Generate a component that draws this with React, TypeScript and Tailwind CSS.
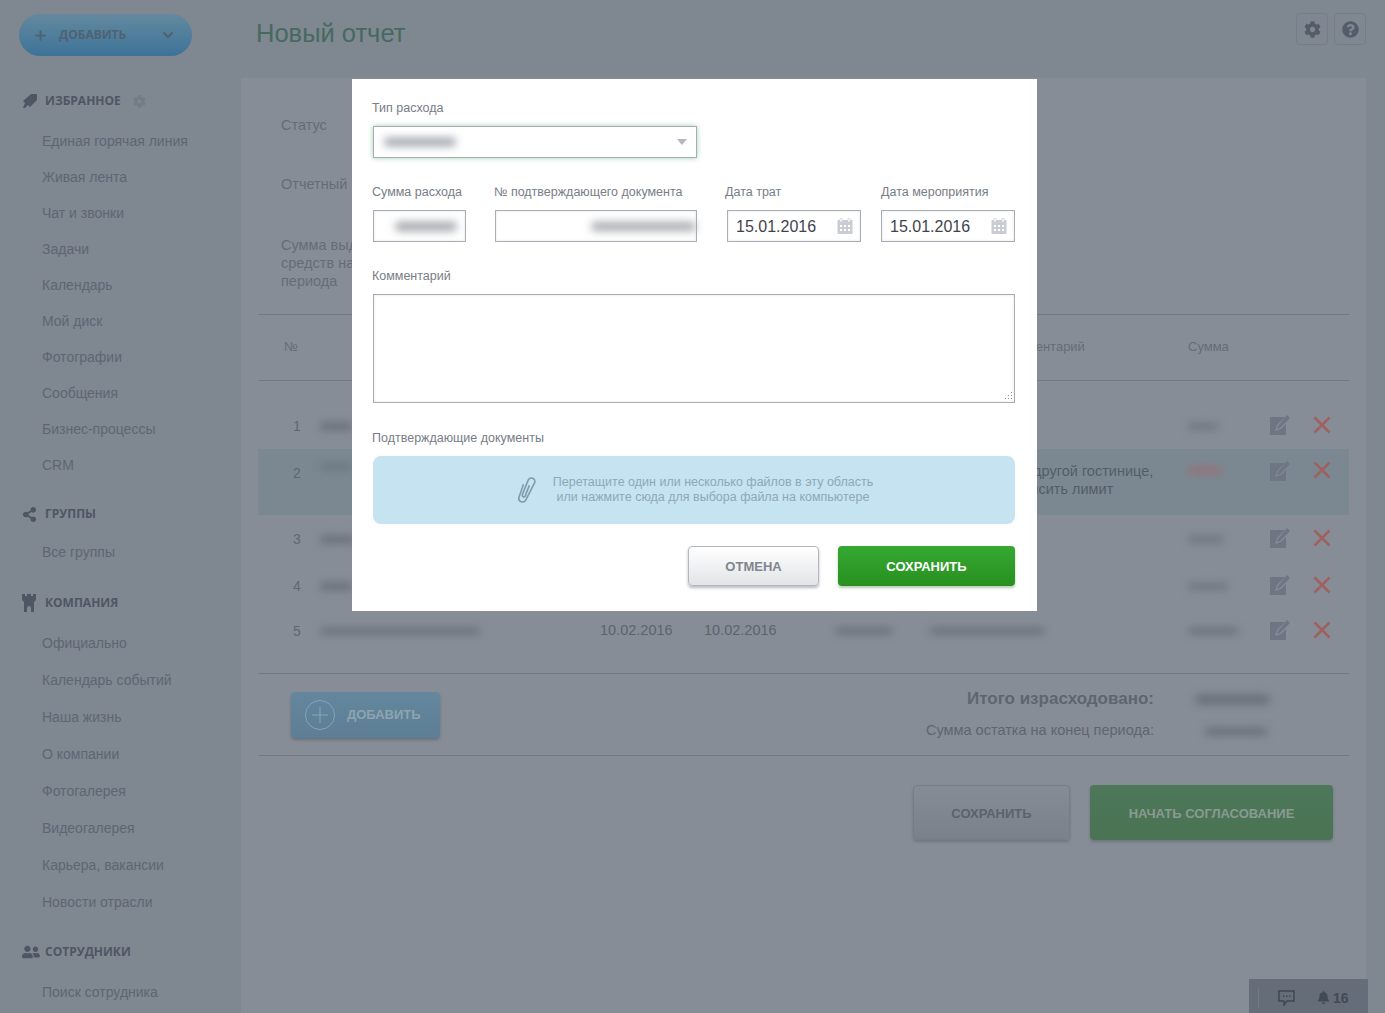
import type { ReactNode } from "react";
import { FaBell, FaCog, FaQuestionCircle, FaShareAlt, FaUserFriends } from "react-icons/fa";
import { ChevronDown, Plus } from "lucide-react";

const favorites = ["Единая горячая линия", "Живая лента", "Чат и звонки", "Задачи", "Календарь", "Мой диск", "Фотографии", "Сообщения", "Бизнес-процессы", "CRM"];
const company = ["Официально", "Календарь событий", "Наша жизнь", "О компании", "Фотогалерея", "Видеогалерея", "Карьера, вакансии", "Новости отрасли"];

const Smudge = ({ w, h = 7, className = "bg-[#666d77]" }: { w: number; h?: number; className?: string }) => (
  <span className={`block rounded-full blur-[4px] ${className}`} style={{ width: w, height: h }} />
);

const EditIcon = () => (
  <svg width="20" height="20" viewBox="0 0 20 20" className="block">
    <path d="M0 2h15L7 10l-2 6 6-2 5-5v11H0z" fill="#6f7683" />
    <path d="M17 0l3 3-10 10-3 1 1-3z" fill="#6f7683" />
  </svg>
);

const DeleteIcon = () => (
  <svg width="18" height="18" viewBox="0 0 18 18" className="block">
    <path d="M1.500 1.500l15 15M16.500 1.500l-15 15" stroke="#a0605f" strokeWidth="2.500" />
  </svg>
);

const CalendarIcon = () => (
  <svg width="16" height="16" viewBox="0 0 16 16" className="block">
    <rect x="0.500" y="2" width="15" height="14" rx="1" fill="#c9ccd3" />
    <rect x="3" y="0.500" width="2" height="3.500" fill="#fff" stroke="#c9ccd3" strokeWidth="0.600" />
    <rect x="11" y="0.500" width="2" height="3.500" fill="#fff" stroke="#c9ccd3" strokeWidth="0.600" />
    <path d="M3 7h2v2H3zM7 7h2v2H7zM11 7h2v2h-2zM3 11h2v2H3zM7 11h2v2H7zM11 11h2v2h-2z" fill="#fff" />
  </svg>
);

const SectionTitle = ({ icon, title }: { icon: ReactNode; title: string }) => (
  <div className="flex h-5 items-center">
    <span className="flex w-[45px] pl-[22px] text-[#4f5663]">{icon}</span>
    <span className="font-['Open_Sans'] text-xs font-bold text-[#4f5663]">{title}</span>
  </div>
);

const SideLink = ({ label, h }: { label: string; h: number }) => (
  <a className="block pl-[42px] text-sm text-[#5e6672]" style={{ height: h, lineHeight: `${h}px` }}>
    {label}
  </a>
);

const Sidebar = () => (
  <aside className="w-[241px] shrink-0">
    <div className="mt-[14px] ml-[19px] flex h-[42px] w-[173px] items-center rounded-[21px] bg-gradient-to-b from-[#63899f] to-[#3d7398] pr-4 pl-[14px]">
      <Plus size={15} strokeWidth={3} className="text-[#4f6272]" />
      <span className="ml-[11px] font-['Open_Sans'] text-xs font-bold text-[#4f6272]">ДОБАВИТЬ</span>
      <ChevronDown size={16} strokeWidth={3} className="ml-auto text-[#4f6272]" />
    </div>
    <div className="mt-[35px]">
      <div className="flex items-center">
        <SectionTitle
          icon={
            <svg width="16" height="16" viewBox="0 0 16 16">
              <path d="M9 1h6v6l-7 7-2-2-3 3H1l2-5-2-2z" fill="#4f5663" />
            </svg>
          }
          title="ИЗБРАННОЕ"
        />
        <FaCog size={13} className="ml-[12px] text-[#737b87]" />
      </div>
      <div className="mt-[12px]">
        {favorites.map((f) => <SideLink key={f} label={f} h={36} />)}
      </div>
    </div>
    <div className="mt-[21px]"><SectionTitle icon={<FaShareAlt size={15} />} title="ГРУППЫ" /></div>
    <div className="mt-[10px]"><SideLink label="Все группы" h={36} /></div>
    <div className="mt-[23px]">
      <SectionTitle
        icon={
          <svg width="14" height="18" viewBox="0 0 14 18">
            <path d="M0 0h3v2h2V0h4v2h2V0h3v6l-2 2v10H9v-4a2 2 0 0 0-4 0v4H2V8L0 6z" fill="#4f5663" />
          </svg>
        }
        title="КОМПАНИЯ"
      />
    </div>
    <div className="mt-[12px]">
      {company.map((c) => <SideLink key={c} label={c} h={37} />)}
    </div>
    <div className="mt-[21px]"><SectionTitle icon={<FaUserFriends size={18} />} title="СОТРУДНИКИ" /></div>
    <div className="mt-[12px]"><SideLink label="Поиск сотрудника" h={36} /></div>
  </aside>
);

type Row = { n: number; name: ReactNode; d1?: string; d2?: string; extra?: boolean; comment?: ReactNode; sum: ReactNode; h: number; active?: boolean };

const rows: Row[] = [
  { n: 1, name: <Smudge w={32} />, sum: <Smudge w={30} h={5} />, h: 46 },
  {
    n: 2, name: <Smudge w={32} className="bg-[#6d7681]" />, active: true, h: 66,
    comment: (
      <div className="-mt-px text-[14.500px] leading-[18px] whitespace-nowrap text-[#555c66]">
        <span className="block pl-[15px]">Заселение в другой гостинице,</span>
        <span className="-ml-[11px] block">необходимо повысить лимит</span>
      </div>
    ),
    sum: <div className="pt-[5px]"><Smudge w={34} h={5} className="bg-[#a0686a]" /></div>,
  },
  { n: 3, name: <Smudge w={36} />, sum: <Smudge w={36} h={5} />, h: 48 },
  { n: 4, name: <Smudge w={32} />, sum: <Smudge w={40} h={5} />, h: 46 },
  {
    n: 5, name: <Smudge w={160} h={6} />, d1: "10.02.2016", d2: "10.02.2016", extra: true,
    comment: <Smudge w={115} h={6} />, sum: <Smudge w={50} h={6} />, h: 44,
  },
];

const rowGrid = "grid grid-cols-[62px_280px_104px_131px_95px_258px_82px_43px_36px]";

const Table = () => (
  <div className="text-[14.500px] text-[#5d636d]">
    <div className={`${rowGrid} h-[67px] items-center border-y border-[#727982] pb-[2px] text-[13px] text-[#666c76]`}>
      <span className="pl-[26px]">№</span>
      <span />
      <span />
      <span />
      <span />
      <span className="pl-[73px]">Комментарий</span>
      <span className="col-span-3">Сумма</span>
    </div>
    <div className="mt-[22px] border-b border-[#727982] pb-[20px]">
      {rows.map((r) => (
        <div key={r.n} className={`${rowGrid} ${r.active ? "items-start bg-[#7b8892] pt-[14px]" : "items-center"}`} style={{ height: r.h }}>
          <span className="pl-[35px] text-sm text-[#5f6670]">{r.n}</span>
          <span>{r.name}</span>
          <span>{r.d1}</span>
          <span>{r.d2}</span>
          <span>{r.extra && <Smudge w={58} h={6} />}</span>
          <span>{r.comment}</span>
          <span>{r.sum}</span>
          <span className="-mt-[2px]"><EditIcon /></span>
          <span className="-mt-[2px]"><DeleteIcon /></span>
        </div>
      ))}
    </div>
  </div>
);

const Main = () => (
  <main className="flex w-[1144px] shrink-0 flex-col">
    <header className="flex h-[78px] items-start pr-[19px] pl-[15px]">
      <h1 className="mt-[17px] text-[25.500px] leading-8 text-[#466a60]">Новый отчет</h1>
      <div className="mt-[13px] ml-auto flex gap-[6px]">
        <span className="flex size-8 items-center justify-center rounded-sm border border-[#767d87]"><FaCog size={17} className="text-[#555c69]" /></span>
        <span className="flex size-8 items-center justify-center rounded-sm border border-[#767d87]"><FaQuestionCircle size={17} className="text-[#555c69]" /></span>
      </div>
    </header>
    <section className="mr-[19px] flex-1 bg-[#878d96] px-[17px]">
      <div className="h-[236px] pl-[23px] text-[14.500px] leading-[18px] text-[#666c75]">
        <p className="pt-[38px]">Статус</p>
        <p className="pt-[41px]">Отчетный</p>
        <p className="pt-[43px]">
          Сумма выданных
          <br />
          средств на начало
          <br />
          периода
        </p>
      </div>
      <Table />
      <div className="flex h-[82px] border-b border-[#727982]">
        <button className="mt-[18px] ml-[33px] flex h-[46px] w-[149px] items-center rounded-sm bg-gradient-to-b from-[#64879e] to-[#5d7e95] pl-[14px] shadow-[0_2px_3px_#6a717a]">
          <span className="flex size-[30px] items-center justify-center rounded-full border border-[#8aa3b4]"><Plus size={26} strokeWidth={1} className="text-[#8aa3b4]" /></span>
          <span className="ml-3 text-[13px] font-bold text-[#8ea3b1]">ДОБАВИТЬ</span>
        </button>
        <div className="ml-auto w-[446px]">
          <div className="mt-[15px] flex h-5 items-center">
            <span className="w-[251px] text-right text-[17px] font-bold whitespace-nowrap text-[#5f656f]">Итого израсходовано:</span>
            <span className="ml-[41px]"><Smudge w={75} h={9} /></span>
          </div>
          <div className="mt-3 flex h-5 items-center">
            <span className="w-[251px] text-right text-[14.500px] whitespace-nowrap text-[#5f656f]">Сумма остатка на конец периода:</span>
            <span className="ml-[51px]"><Smudge w={62} h={7} /></span>
          </div>
        </div>
      </div>
      <div className="mt-[29px] flex justify-end gap-5 pr-4">
        <button className="h-[55px] w-[157px] rounded-sm border border-[#767d87] bg-gradient-to-b from-[#868c96] to-[#7a818b] pt-[2px] text-[13px] font-bold text-[#5c626d] shadow-[0_2px_3px_#6f7680]">СОХРАНИТЬ</button>
        <button className="h-[55px] w-[243px] rounded-sm bg-gradient-to-b from-[#4d7859] to-[#497353] pt-[2px] text-[13px] font-bold text-[#8a9a93] shadow-[0_2px_3px_#6f7680]">НАЧАТЬ СОГЛАСОВАНИЕ</button>
      </div>
    </section>
  </main>
);

const inputClass = "h-8 border border-[#a9adb3] bg-white shadow-[inset_0_0_3px_#e2e4e8]";

const Label = ({ children }: { children: ReactNode }) => (
  <div className="h-[18px] text-[12.500px] leading-[18px] whitespace-nowrap text-[#777d86]">{children}</div>
);

const DateField = () => (
  <div className={`${inputClass} flex w-[134px] items-center justify-between pr-[7px] pl-2 text-base text-[#3f444c]`}>
    <span className="pt-[2px]">15.01.2016</span>
    <CalendarIcon />
  </div>
);

const ExpenseModal = () => (
  <div className="absolute top-[79px] left-[352px] h-[532px] w-[685px] bg-white pt-5 pl-5">
    <Label>Тип расхода</Label>
    <div className="mt-[9px] ml-px flex h-8 w-[324px] items-center border border-[#a9adb3] bg-white pr-[9px] pl-[10px] shadow-[0_0_5px_#9fd0ae]">
      <Smudge w={72} h={8} className="bg-[#9a9ea6]" />
      <span className="ml-auto size-0 border-x-[5px] border-t-[6px] border-x-transparent border-t-[#b4b7bd]" />
    </div>
    <div className="mt-[25px] flex">
      <div className="w-[122px]">
        <Label>Сумма расхода</Label>
        <div className={`${inputClass} mt-[9px] ml-px flex w-[93px] items-center pl-[21px]`}>
          <Smudge w={62} h={9} className="bg-[#a0a3a8]" />
        </div>
      </div>
      <div className="w-[231px]">
        <Label>№ подтверждающего документа</Label>
        <div className={`${inputClass} mt-[9px] ml-px flex w-[202px] items-center justify-end`}>
          <Smudge w={105} h={9} className="bg-[#a6a9ad]" />
        </div>
      </div>
      <div className="w-[156px]">
        <Label>Дата трат</Label>
        <div className="mt-[9px] ml-[2px]"><DateField /></div>
      </div>
      <div>
        <Label>Дата мероприятия</Label>
        <div className="mt-[9px]"><DateField /></div>
      </div>
    </div>
    <div className="mt-[25px]"><Label>Комментарий</Label></div>
    <div className="relative mt-[9px] ml-px h-[109px] w-[642px] border border-[#a9adb3] bg-white shadow-[inset_0_0_3px_#e2e4e8]">
      <svg width="10" height="10" viewBox="0 0 10 10" className="absolute right-px bottom-px">
        <path d="M8 1h1v1H8zM5 4h1v1H5zM8 4h1v1H8zM2 7h1v1H2zM5 7h1v1H5zM8 7h1v1H8z" fill="#8f939a" />
      </svg>
    </div>
    <div className="mt-[26px]"><Label>Подтверждающие документы</Label></div>
    <div className="mt-[9px] ml-px flex h-[68px] w-[642px] items-center justify-center rounded-lg bg-[#c5e3f1]">
      <svg width="24" height="28" viewBox="0 0 20 24" fill="none" stroke="#7f9cae" strokeWidth="1.400" className="mr-[14px]">
        <path d="M7 7L3 18.500a3.200 3.200 0 0 0 6 2L16.500 6a3 3 0 0 0-5.500-2.500L6 16a1.300 1.300 0 0 0 2.500 1L12 8" />
      </svg>
      <p className="text-center text-[12.500px] leading-[15px] text-[#8ea8b8]">
        Перетащите один или несколько файлов в эту область
        <br />
        или нажмите сюда для выбора файла на компьютере
      </p>
    </div>
    <div className="mt-[22px] ml-px flex w-[642px] justify-end gap-[19px]">
      <button className="h-10 w-[131px] rounded-sm border border-[#b4b7bd] bg-gradient-to-b from-white to-[#e2e4e7] pt-px text-[13px] font-bold text-[#80858d] shadow-[0_2px_3px_#b9bcc2]">ОТМЕНА</button>
      <button className="h-10 w-[177px] rounded-sm bg-gradient-to-b from-[#36a834] to-[#28901f] pt-px text-[13px] font-bold text-white shadow-[0_2px_3px_#b5c9b3]">СОХРАНИТЬ</button>
    </div>
  </div>
);

const ChatBar = () => (
  <div className="absolute top-[979px] left-[1249px] flex h-[34px] w-[119px] items-center bg-[#656d79] pt-[3px] pl-[9px] text-[#424a56]">
    <span className="h-5 w-px bg-[#727a85]" />
    <svg width="17" height="17" viewBox="0 0 17 17" className="ml-[19px] text-[#3f4753]">
      <path d="M1 2h15v10H9l-3 4v-4H1z" fill="none" stroke="currentColor" strokeWidth="1.500" />
      <path d="M5 6.500h1.500V8H5zM8 6.500h1.500V8H8zM11 6.500h1.500V8H11z" fill="currentColor" />
    </svg>
    <FaBell size={13} className="ml-[22px]" />
    <span className="ml-[3px] text-sm font-bold">16</span>
  </div>
);

export default function App() {
  return (
    <div className="relative flex h-[1013px] overflow-hidden bg-[#7f8791] font-['Liberation_Sans',sans-serif]">
      <Sidebar />
      <Main />
      <ExpenseModal />
      <ChatBar />
    </div>
  );
}
